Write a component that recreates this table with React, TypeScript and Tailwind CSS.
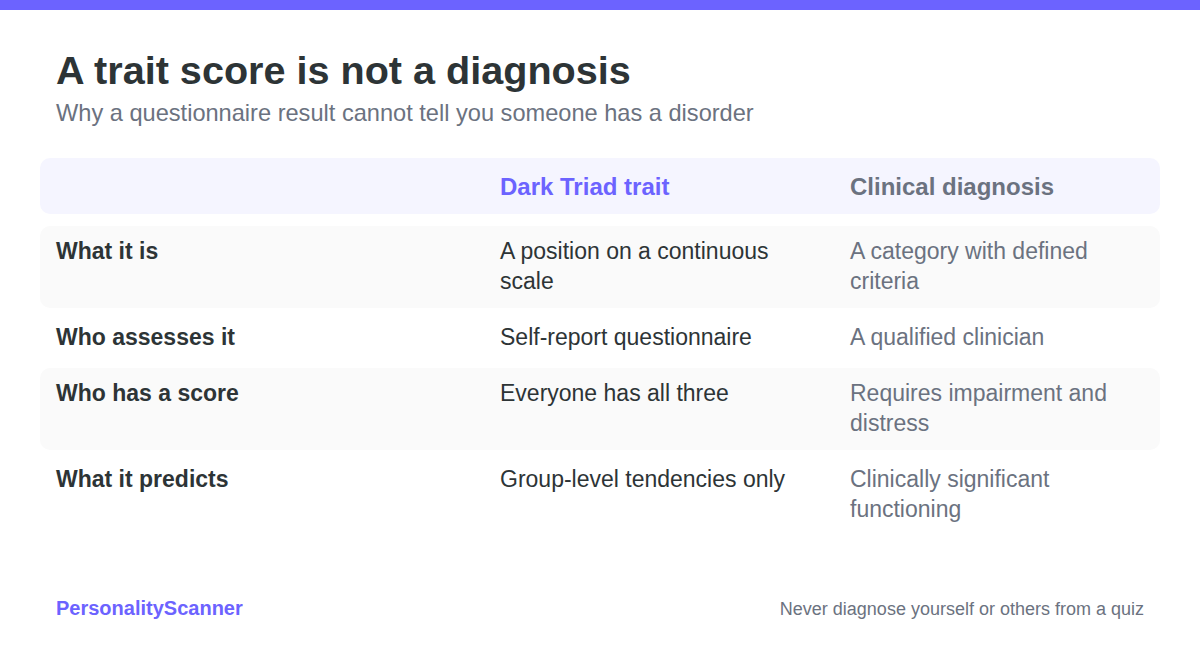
const rows = [
  { label: "What it is", trait: "A position on a continuous scale", clinical: "A category with defined criteria" },
  { label: "Who assesses it", trait: "Self-report questionnaire", clinical: "A qualified clinician" },
  { label: "Who has a score", trait: "Everyone has all three", clinical: "Requires impairment and distress" },
  { label: "What it predicts", trait: "Group-level tendencies only", clinical: "Clinically significant functioning" },
];

const App = () => {
  return (
    <div className="flex h-[648px] w-[1200px] flex-col bg-white font-[family-name:'Liberation_Sans',Arial,sans-serif]">
      <div className="h-[10px] bg-[#6c63ff]" />
      <main className="flex flex-1 flex-col px-10 pt-9">
        <header className="px-4">
          <h1 className="text-[39.6px] font-bold leading-[48px] text-[#2d3436]">A trait score is not a diagnosis</h1>
          <p className="mt-1 text-[23.6px] leading-[30px] text-[#6b7280]">
            Why a questionnaire result cannot tell you someone has a disorder
          </p>
        </header>

        <div className="mt-[30px] flex flex-col gap-1">
          <div className="mb-2 grid grid-cols-[444px_350px_1fr] rounded-[10px] bg-[#f5f5ff] pt-[14px] pb-[12px] text-[24px] font-bold leading-[30px]">
            <div className="px-4" />
            <div className="px-4 text-[#6c63ff]">Dark Triad trait</div>
            <div className="px-4 text-[#6b7280]">Clinical diagnosis</div>
          </div>
          {rows.map((row, i) => (
            <div
              key={row.label}
              className={`grid grid-cols-[444px_350px_1fr] rounded-[10px] pt-[10px] pb-[12px] text-[23px] leading-[30px] ${
                i % 2 === 0 ? "bg-[#fafafa]" : "bg-white"
              }`}
            >
              <div className="px-4 font-bold text-[#2d3436]">{row.label}</div>
              <div className="px-4 text-[#2d3436]">{row.trait}</div>
              <div className="px-4 text-[#6b7280]">{row.clinical}</div>
            </div>
          ))}
        </div>

        <footer className="mt-auto flex items-baseline justify-between px-4 pb-[27px]">
          <span className="text-[20px] font-bold leading-6 text-[#6c63ff]">PersonalityScanner</span>
          <span className="text-[18px] leading-6 text-[#6b7280]">Never diagnose yourself or others from a quiz</span>
        </footer>
      </main>
    </div>
  );
};

export default App;
